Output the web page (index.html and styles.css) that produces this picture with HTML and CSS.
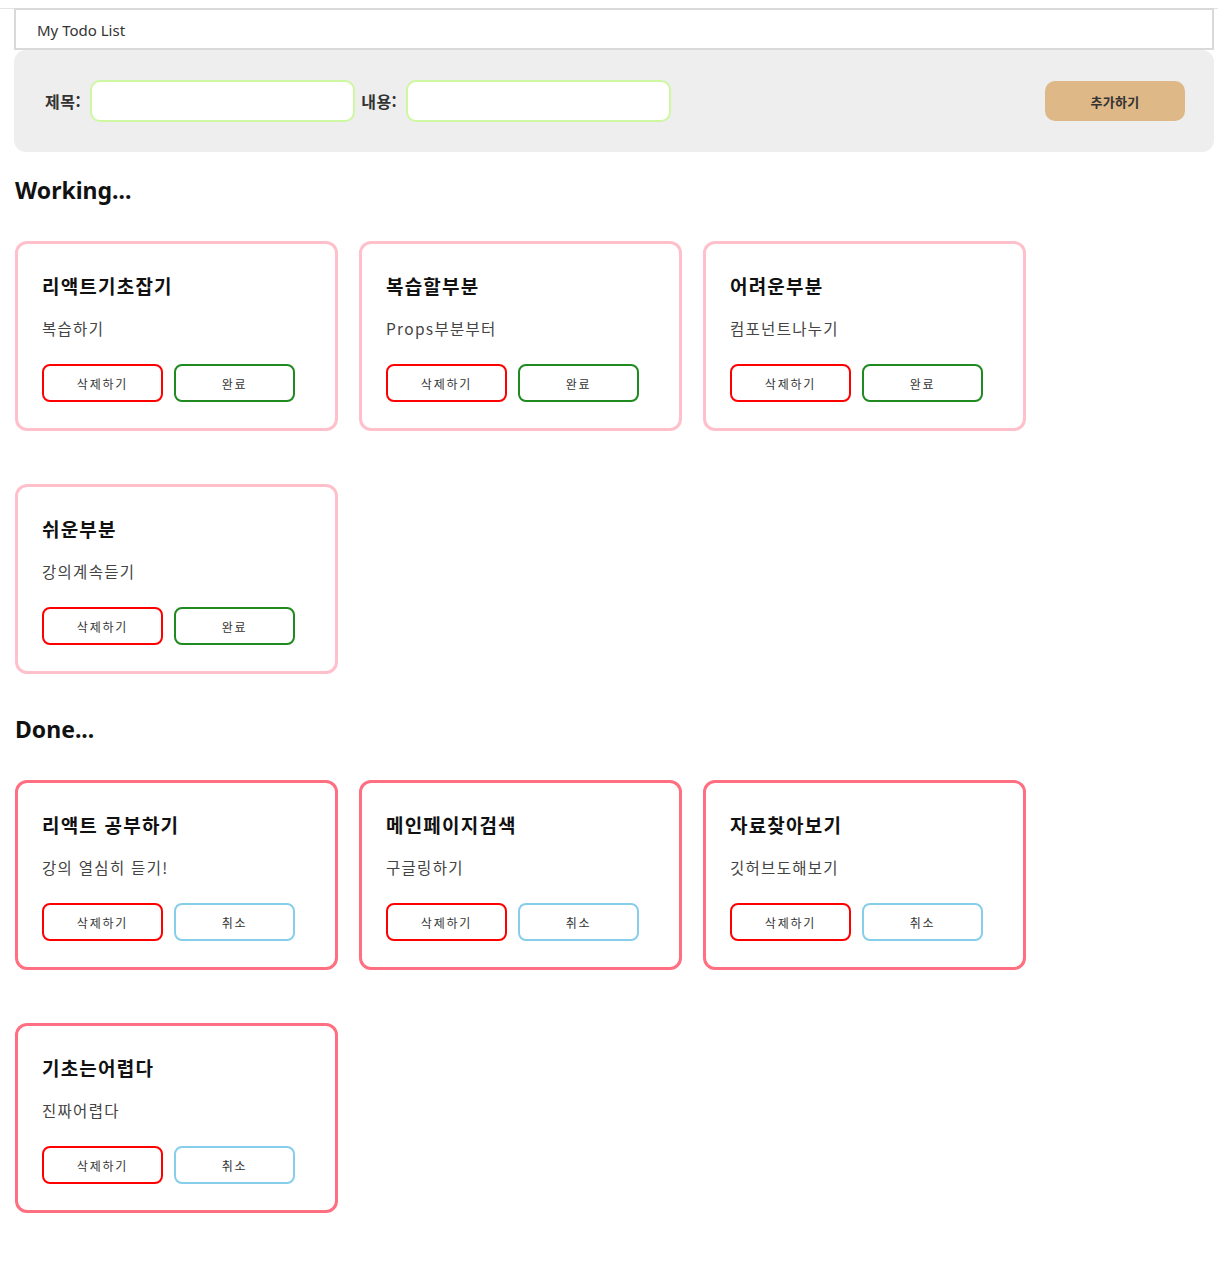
FILE: index.html
```html
<!DOCTYPE html>
<html lang="ko">
<head>
<meta charset="utf-8">
<title>My Todo List</title>
<link rel="stylesheet" href="styles.css">
</head>
<body>
<div class="topline"></div>
<div class="layout">
  <header class="header">My Todo List</header>
  <form class="add-form" onsubmit="return false">
    <div class="fields">
      <label class="label">제목:</label>
      <input class="input" type="text">
      <label class="label">내용:</label>
      <input class="input" type="text">
    </div>
    <button class="add-btn" type="button">추가하기</button>
  </form>

  <h2 class="section-title first">Working...</h2>
  <div class="list">
    <div class="card working">
      <h3 class="card-title">리액트기초잡기</h3>
      <p class="card-body">복습하기</p>
      <div class="actions"><button class="btn del">삭제하기</button><button class="btn done">완료</button></div>
    </div>
    <div class="card working">
      <h3 class="card-title">복습할부분</h3>
      <p class="card-body">Props부분부터</p>
      <div class="actions"><button class="btn del">삭제하기</button><button class="btn done">완료</button></div>
    </div>
    <div class="card working">
      <h3 class="card-title">어려운부분</h3>
      <p class="card-body">컴포넌트나누기</p>
      <div class="actions"><button class="btn del">삭제하기</button><button class="btn done">완료</button></div>
    </div>
    <div class="card working">
      <h3 class="card-title">쉬운부분</h3>
      <p class="card-body">강의계속듣기</p>
      <div class="actions"><button class="btn del">삭제하기</button><button class="btn done">완료</button></div>
    </div>
  </div>

  <h2 class="section-title">Done...</h2>
  <div class="list">
    <div class="card finished">
      <h3 class="card-title">리액트 공부하기</h3>
      <p class="card-body">강의 열심히 듣기!</p>
      <div class="actions"><button class="btn del">삭제하기</button><button class="btn cancel">취소</button></div>
    </div>
    <div class="card finished">
      <h3 class="card-title">메인페이지검색</h3>
      <p class="card-body">구글링하기</p>
      <div class="actions"><button class="btn del">삭제하기</button><button class="btn cancel">취소</button></div>
    </div>
    <div class="card finished">
      <h3 class="card-title">자료찾아보기</h3>
      <p class="card-body">깃허브도해보기</p>
      <div class="actions"><button class="btn del">삭제하기</button><button class="btn cancel">취소</button></div>
    </div>
    <div class="card finished">
      <h3 class="card-title">기초는어렵다</h3>
      <p class="card-body">진짜어렵다</p>
      <div class="actions"><button class="btn del">삭제하기</button><button class="btn cancel">취소</button></div>
    </div>
  </div>
</div>
</body>
</html>
```

FILE: styles.css
```css
* { box-sizing: border-box; }

html, body {
  margin: 0;
  padding: 0;
  background: #fff;
}

body {
  font-family: "Noto Sans", "Noto Sans CJK KR", sans-serif;
  color: #222;
  padding: 8px 0 40px 0;
}

.topline {
  height: 1px;
  background: #e4e4e4;
  margin: 0 8px 0 0;
}

.layout {
  width: 1200px;
  margin-left: 14px;
  margin-top: -1px;
}

.header {
  height: 42px;
  border: 2px solid #d9d9d9;
  padding: 1px 0 0 21px;
  display: flex;
  align-items: center;
  font-size: 15px;
  color: #333;
  font-family: "Noto Sans", "Noto Sans CJK KR", sans-serif;
}

.add-form {
  height: 102px;
  background: #eeeeee;
  border-radius: 12px;
  display: flex;
  align-items: center;
  justify-content: space-between;
  padding: 0 29px 0 31px;
}

.fields {
  display: flex;
  align-items: center;
}

.label {
  font-family: "Noto Sans CJK KR", sans-serif;
  font-weight: 700;
  font-size: 16px;
  letter-spacing: 0.5px;
  color: #333;
  margin-right: 9px;
}

.input {
  width: 265px;
  height: 42px;
  border: 2px solid #cdf7a0;
  border-radius: 10px;
  background: #fff;
  outline: none;
  margin-right: 6px;
  font-size: 15px;
}

.add-btn {
  width: 140px;
  height: 40px;
  border: none;
  border-radius: 10px;
  background: #deb887;
  font-family: "Noto Sans CJK KR", sans-serif;
  font-weight: 700;
  font-size: 13px;
  letter-spacing: 0.3px;
  color: #333;
}

.section-title {
  font-family: "Noto Sans", "Noto Sans CJK KR", sans-serif;
  font-weight: 700;
  font-size: 23px;
  line-height: 30px;
  height: 30px;
  margin: 40px 0 36px 1px;
  color: #111;
}

.section-title.first {
  margin-top: 23px;
}

.list {
  display: grid;
  grid-template-columns: repeat(3, 323px);
  column-gap: 21px;
  row-gap: 53px;
  padding-left: 1px;
}

.card {
  height: 190px;
  border: 3px solid #ffc0cb;
  border-radius: 12px;
  padding: 29px 24px 0 24px;
  background: #fff;
}

.card.finished {
  border-color: #ff6f82;
}

.card-title {
  font-family: "Noto Sans CJK KR", sans-serif;
  font-weight: 700;
  font-size: 19px;
  letter-spacing: 1.2px;
  line-height: 26px;
  margin: 0;
  color: #111;
}

.card-body {
  font-family: "Noto Sans CJK KR", sans-serif;
  font-size: 15.5px;
  letter-spacing: 1.3px;
  line-height: 21px;
  margin: 19px 0 0 0;
  color: #444;
}

.actions {
  display: flex;
  gap: 11px;
  margin-top: 25px;
}

.btn {
  width: 121px;
  height: 38px;
  background: #fff;
  border: 2px solid red;
  border-radius: 8px;
  font-family: "Noto Sans CJK KR", sans-serif;
  font-size: 12px;
  letter-spacing: 1.8px;
  color: #333;
  padding: 0;
}

.btn.done {
  border-color: #1f8a1f;
}

.btn.cancel {
  border-color: #87ceeb;
}
```
